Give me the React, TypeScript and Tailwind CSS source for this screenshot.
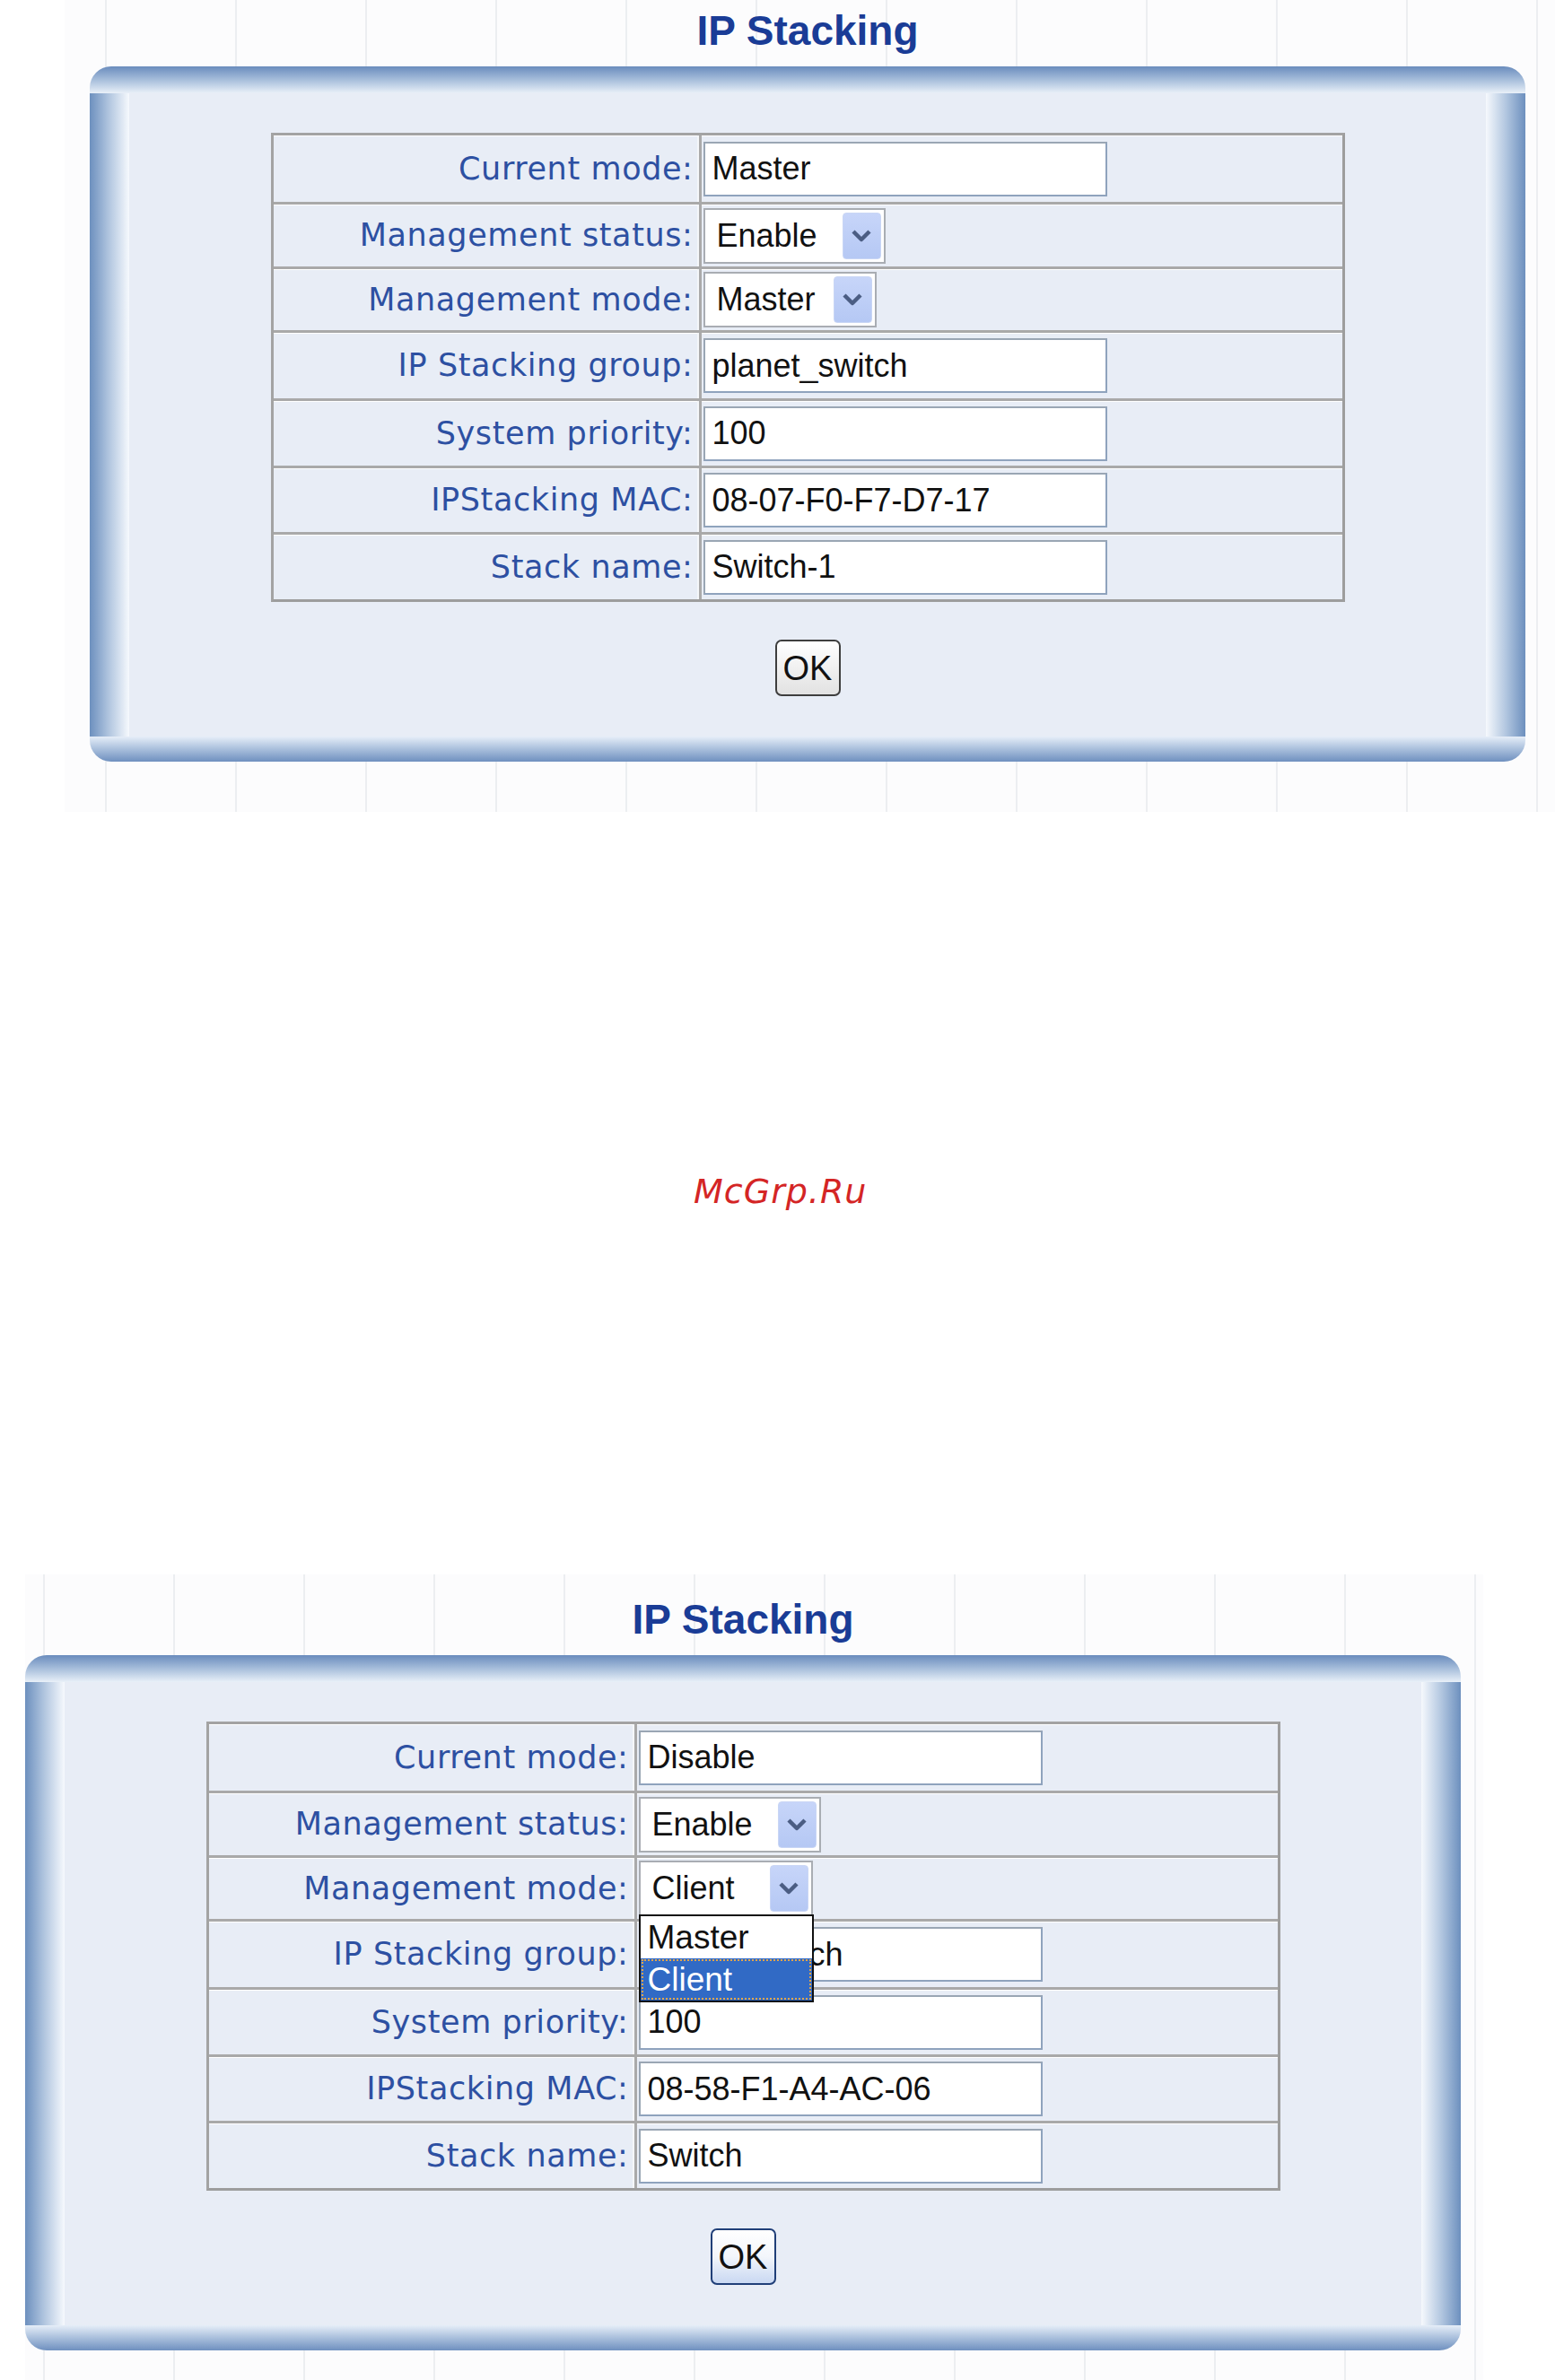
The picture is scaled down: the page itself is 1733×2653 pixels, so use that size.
import React from "react";

type Row = {
  label: string;
  kind: "text" | "select";
  value: string;
  h: string;
  selW?: string;
  open?: boolean;
};

const rowsMaster: Row[] = [
  { label: "Current mode:", kind: "text", value: "Master", h: "h-[74px]" },
  { label: "Management status:", kind: "select", value: "Enable", h: "h-[72px]", selW: "w-[203px]" },
  { label: "Management mode:", kind: "select", value: "Master", h: "h-[71px]", selW: "w-[193px]" },
  { label: "IP Stacking group:", kind: "text", value: "planet_switch", h: "h-[76px]" },
  { label: "System priority:", kind: "text", value: "100", h: "h-[75px]" },
  { label: "IPStacking MAC:", kind: "text", value: "08-07-F0-F7-D7-17", h: "h-[74px]" },
  { label: "Stack name:", kind: "text", value: "Switch-1", h: "h-[75px]" },
];

const rowsClient: Row[] = [
  { label: "Current mode:", kind: "text", value: "Disable", h: "h-[74px]" },
  { label: "Management status:", kind: "select", value: "Enable", h: "h-[72px]", selW: "w-[203px]" },
  { label: "Management mode:", kind: "select", value: "Client", h: "h-[71px]", selW: "w-[194px]", open: true },
  { label: "IP Stacking group:", kind: "text", value: "planet_switch", h: "h-[76px]" },
  { label: "System priority:", kind: "text", value: "100", h: "h-[75px]" },
  { label: "IPStacking MAC:", kind: "text", value: "08-58-F1-A4-AC-06", h: "h-[74px]" },
  { label: "Stack name:", kind: "text", value: "Switch", h: "h-[75px]" },
];

const valueFont = "font-['Liberation_Sans',Arial,sans-serif] text-[36px] leading-none text-[#111]";

function Chevron() {
  return (
    <svg width="24" height="16" viewBox="0 0 24 16">
      <path d="M3 3 L12 12 L21 3" fill="none" stroke="#4b5d83" strokeWidth="4.5" strokeLinejoin="round" />
    </svg>
  );
}

function SelectBox({ row }: { row: Row }) {
  return (
    <div className={`relative ${row.selW} h-[62px] border-2 border-[#a9adb3] bg-white flex items-center justify-between pl-[13px] pr-[3px]`}>
      <span className={valueFont}>{row.value}</span>
      <div className="w-[43px] h-[52px] rounded-[4px] border border-[#c9d6f5] bg-gradient-to-b from-[#c7d5f9] to-[#b5c8f4] flex items-center justify-center">
        <Chevron />
      </div>
      {row.open && (
        <div className="absolute z-10 left-[-2px] top-full w-[195px] border-2 border-[#111] bg-white">
          <div className="h-[47px] flex items-center pl-[8px] font-['Liberation_Sans',Arial,sans-serif] text-[37px] leading-none text-[#111]">
            Master
          </div>
          <div className="h-[47px] flex items-center pl-[8px] bg-[#316ac5] outline-dotted outline-2 outline-offset-[-3px] outline-[#e3a64a] font-['Liberation_Sans',Arial,sans-serif] text-[37px] leading-none text-white">
            Client
          </div>
        </div>
      )}
    </div>
  );
}

function TextBox({ value }: { value: string }) {
  return (
    <div className="w-[450px] h-[61px] border-2 border-[#8fa3bd] border-t-[#9aa6b4] border-l-[#9aa6b4] bg-white flex items-center pl-[8px] overflow-hidden">
      <span className={`${valueFont} whitespace-nowrap`}>{value}</span>
    </div>
  );
}

function Panel({ rows, blueButton }: { rows: Row[]; blueButton?: boolean }) {
  return (
    <div className="w-[1600px]">
      {/* title */}
      <div className="h-[74px] pt-[11px] text-center">
        <span className="font-['Liberation_Sans',Arial,sans-serif] font-bold text-[46px] leading-[46px] text-[#1a3c96]">
          IP Stacking
        </span>
      </div>

      {/* top frame */}
      <div className="h-[30px] rounded-t-[24px] bg-gradient-to-b from-[#6a8cbd] via-[#a7bedb] to-[#e9f0f8]" />

      <div className="flex">
        <div className="w-[44px] bg-gradient-to-r from-[#6d90be] via-[#b3c7e0] to-[#f6f9fd]" />
        <div className="flex-1 bg-[#e8edf6] pt-[44px] pb-[45px] flex flex-col items-center">
          {/* form table */}
          <div className="w-[1197px] border-[3px] border-[#a3a3a3] border-b-[#9d9d9d] border-r-[#9d9d9d]">
            {rows.map((r, i) => (
              <div
                key={r.label}
                className={`flex ${r.h} ${i > 0 ? "border-t-[3px] border-t-[#a9a9a9]" : ""} shadow-[inset_0_1px_0_#ffffff]`}
              >
                <div className="w-[474px] border-r-2 border-r-[#f4f6f9] flex items-center justify-end pr-[4px]">
                  <span className="font-['DejaVu_Sans',Verdana,sans-serif] text-[35px] tracking-[0.6px] leading-none text-[#2d50a2]">
                    {r.label}
                  </span>
                </div>
                <div className="flex-1 border-l-[3px] border-l-[#aaaaaa] flex items-center pl-[2px]">
                  {r.kind === "text" ? <TextBox value={r.value} /> : <SelectBox row={r} />}
                </div>
              </div>
            ))}
          </div>

          {/* OK button */}
          <button
            className={`mt-[42px] w-[73px] h-[63px] rounded-[7px] border-2 flex items-center justify-center font-['Liberation_Sans',Arial,sans-serif] text-[38px] leading-none text-[#111] ${
              blueButton
                ? "border-[#203f78] bg-gradient-to-b from-white via-[#f3f6fb] to-[#c9d8f2]"
                : "border-[#3e3e3e] bg-gradient-to-b from-white to-[#e2e2e2]"
            }`}
          >
            OK
          </button>
        </div>
        <div className="w-[44px] bg-gradient-to-l from-[#6d90be] via-[#b3c7e0] to-[#f6f9fd]" />
      </div>

      {/* bottom frame */}
      <div className="h-[28px] rounded-b-[24px] bg-gradient-to-b from-[#e6eef8] via-[#a9bfdc] to-[#6f90bf]" />
    </div>
  );
}

export default function App() {
  return (
    <div className="w-[1733px] h-[2653px] bg-white overflow-hidden">
      {/* first screenshot: master mode */}
      <section className="ml-[72px] h-[905px] bg-[#fcfcfd] bg-[linear-gradient(90deg,#eceef1_2px,transparent_2px)] bg-[length:145px_100%] bg-[position:45px_0]">
        <div className="pl-[28px]">
          <Panel rows={rowsMaster} />
        </div>
      </section>

      {/* watermark */}
      <div className="h-[850px] pt-[400px]">
        <span className="ml-[773px] font-['DejaVu_Sans',sans-serif] italic text-[38px] leading-[46px] tracking-[1px] text-[#d42525]">
          McGrp.Ru
        </span>
      </div>

      {/* second screenshot: client mode, list open */}
      <section className="ml-[28px] w-[1625px] h-[898px] pt-[16px] bg-[#fcfcfd] bg-[linear-gradient(90deg,#eceef1_2px,transparent_2px)] bg-[length:145px_100%] bg-[position:20px_0]">
        <Panel rows={rowsClient} blueButton />
      </section>
    </div>
  );
}
